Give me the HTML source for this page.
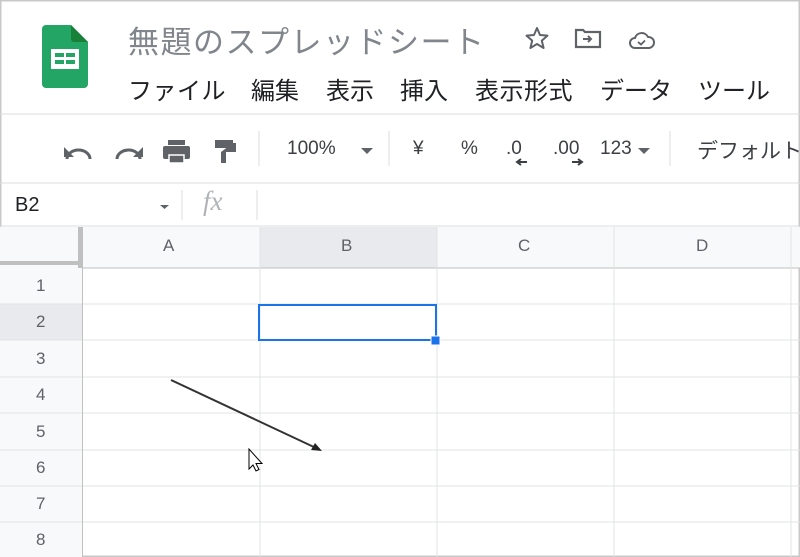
<!DOCTYPE html>
<html><head><meta charset="utf-8"><style>
body{margin:0;width:800px;height:557px;overflow:hidden;background:#fff;font-family:"Liberation Sans","Noto Sans CJK JP",sans-serif;position:relative}
.t{position:absolute;white-space:nowrap}
.m{position:absolute;top:71px;font-size:24px;color:#202124;white-space:nowrap}
</style></head><body>
<svg width="800" height="557" style="position:absolute;left:0;top:0">
<rect x="0.5" y="0.5" width="799" height="556" fill="none" stroke="#c8c8c8" stroke-width="2"/>
<path d="M46 25h25l17 17v42a4 4 0 0 1-4 4H46a4 4 0 0 1-4-4V29a4 4 0 0 1 4-4z" fill="#23a566"/>
<path d="M71 25l17 17H74a3 3 0 0 1-3-3z" fill="#188038"/>
<rect x="51" y="49" width="28" height="20" fill="#fff"/>
<rect x="55" y="53" width="9" height="4" fill="#23a566"/><rect x="66" y="53" width="9" height="4" fill="#23a566"/>
<rect x="55" y="60" width="9" height="4" fill="#23a566"/><rect x="66" y="60" width="9" height="4" fill="#23a566"/>
<path d="M537 28l3 7 7.5.6-5.7 5 1.8 7.4L537 44l-6.6 4 1.8-7.4-5.7-5 7.5-.6z" fill="none" stroke="#5f6368" stroke-width="2" stroke-linejoin="round"/>
<path d="M576 30h7l2 2h15v15h-24z" fill="none" stroke="#5f6368" stroke-width="2.2"/>
<path d="M583 39h8M588 36l3 3-3 3" fill="none" stroke="#5f6368" stroke-width="2"/>
<path d="M635 48a5 5 0 0 1 0-10 7 7 0 0 1 13-1 5.5 5.5 0 0 1 1 11z" fill="none" stroke="#5f6368" stroke-width="2"/>
<path d="M638 42l3 2.5 4-4" fill="none" stroke="#5f6368" stroke-width="1.8"/>
<line x1="0" y1="114" x2="800" y2="114" stroke="#dadce0"/>
<line x1="0" y1="183" x2="800" y2="183" stroke="#dadce0"/>
<line x1="0" y1="226" x2="800" y2="226" stroke="#dadce0"/>
<line x1="259" y1="131" x2="259" y2="166" stroke="#dadce0"/>
<line x1="389" y1="131" x2="389" y2="166" stroke="#dadce0"/>
<line x1="670" y1="131" x2="670" y2="166" stroke="#dadce0"/>
<line x1="182" y1="190" x2="182" y2="220" stroke="#dadce0"/>
<line x1="257" y1="190" x2="257" y2="220" stroke="#dadce0"/>
<path d="M67 159a9 7 0 0 1 23 0" fill="none" stroke="#5f6368" stroke-width="3"/><path d="M64 147v10h10z" fill="#5f6368"/>
<path d="M140 159a9 7 0 0 0-23 0" fill="none" stroke="#5f6368" stroke-width="3"/><path d="M143 147v10h-10z" fill="#5f6368"/>
<rect x="163" y="146" width="27" height="13" rx="2" fill="#5f6368"/><rect x="168" y="140" width="17" height="5" fill="#5f6368"/><rect x="169" y="155" width="15" height="8" fill="#5f6368" stroke="#fff" stroke-width="1.5"/>
<path d="M215 140h18v8h-18z M233 143h3v9h-10v11h-5v-11" fill="#5f6368"/>
<path d="M361 148h12l-6 6z" fill="#5f6368"/>
<path d="M638 148h12l-6 6z" fill="#5f6368"/>
<path d="M160 205h9l-4.5 4z" fill="#5f6368"/>
<path d="M517 162h10M521 159l-4 3 4 3" fill="none" stroke="#3c4043" stroke-width="2"/>
<path d="M572 162h10M578 159l4 3-4 3" fill="none" stroke="#3c4043" stroke-width="2"/>
<rect x="0" y="227" width="800" height="41" fill="#f8f9fa"/>
<rect x="0" y="268" width="82" height="289" fill="#f8f9fa"/>
<rect x="260" y="227" width="177" height="41" fill="#e8eaed"/>
<rect x="0" y="304" width="82" height="36" fill="#e8eaed"/>
<rect x="78" y="227" width="4" height="41" fill="#c0c0c0"/>
<rect x="0" y="261" width="82" height="4" fill="#c0c0c0"/>
<g stroke="#e2e3e3" stroke-width="1">
<line x1="82" y1="268" x2="800" y2="268" stroke="#c0c0c0"/>
<line x1="0" y1="304" x2="800" y2="304"/><line x1="0" y1="340" x2="800" y2="340"/>
<line x1="0" y1="377" x2="800" y2="377"/><line x1="0" y1="413" x2="800" y2="413"/>
<line x1="0" y1="450" x2="800" y2="450"/><line x1="0" y1="486" x2="800" y2="486"/>
<line x1="0" y1="522" x2="800" y2="522"/>
<line x1="82.5" y1="227" x2="82.5" y2="557" stroke="#c0c0c0"/>
<line x1="260" y1="227" x2="260" y2="557"/><line x1="437" y1="227" x2="437" y2="557"/>
<line x1="614" y1="227" x2="614" y2="557"/><line x1="791" y1="227" x2="791" y2="557"/>
</g>
<rect x="259" y="305" width="177" height="35" fill="none" stroke="#1a73e8" stroke-width="2"/>
<rect x="431" y="336" width="9" height="9" fill="#1a73e8" stroke="#fff"/>
<line x1="171" y1="380" x2="316" y2="448" stroke="#333" stroke-width="2"/>
<path d="M322 451l-11-1 4-7z" fill="#222"/>
<path d="M249 449v20l4-4 3 6 3-1.5-3-6h6z" fill="#fff" stroke="#000" stroke-width="1"/>
</svg>
<div class="t" style="left:128px;top:17px;font-size:31px;letter-spacing:1.5px;color:#80868b">無題のスプレッドシート</div>
<div class="m" style="left:128px;letter-spacing:0.5px">ファイル</div>
<div class="m" style="left:251px">編集</div>
<div class="m" style="left:326px">表示</div>
<div class="m" style="left:400px">挿入</div>
<div class="m" style="left:475px;letter-spacing:0.5px">表示形式</div>
<div class="m" style="left:600px">データ</div>
<div class="m" style="left:698px">ツール</div>
<div class="t" style="left:287px;top:138px;font-size:19px;color:#3c4043">100%</div>
<div class="t" style="left:413px;top:138px;font-size:19px;color:#3c4043">¥</div>
<div class="t" style="left:461px;top:138px;font-size:19px;color:#3c4043">%</div>
<div class="t" style="left:506px;top:138px;font-size:19px;color:#3c4043">.0</div>
<div class="t" style="left:553px;top:138px;font-size:19px;color:#3c4043">.00</div>
<div class="t" style="left:600px;top:138px;font-size:19px;color:#3c4043">123</div>
<div class="t" style="left:697px;top:135px;font-size:21px;color:#3c4043">デフォルト</div>
<div class="t" style="left:15px;top:194px;font-size:20px;color:#202124">B2</div>
<div class="t" style="left:203px;top:186px;font-size:27px;color:#b0b3b6;font-family:'Liberation Serif',serif;font-style:italic">fx</div>
<div class="t" style="left:163px;top:236px;font-size:17px;color:#5f6368">A</div>
<div class="t" style="left:341px;top:236px;font-size:17px;color:#5f6368">B</div>
<div class="t" style="left:518px;top:236px;font-size:17px;color:#5f6368">C</div>
<div class="t" style="left:696px;top:236px;font-size:17px;color:#5f6368">D</div>
<div class="t" style="left:36px;top:276px;font-size:17px;color:#5f6368">1</div>
<div class="t" style="left:36px;top:312px;font-size:17px;color:#5f6368">2</div>
<div class="t" style="left:36px;top:349px;font-size:17px;color:#5f6368">3</div>
<div class="t" style="left:36px;top:385px;font-size:17px;color:#5f6368">4</div>
<div class="t" style="left:36px;top:422px;font-size:17px;color:#5f6368">5</div>
<div class="t" style="left:36px;top:458px;font-size:17px;color:#5f6368">6</div>
<div class="t" style="left:36px;top:494px;font-size:17px;color:#5f6368">7</div>
<div class="t" style="left:36px;top:530px;font-size:17px;color:#5f6368">8</div>
</body></html>
